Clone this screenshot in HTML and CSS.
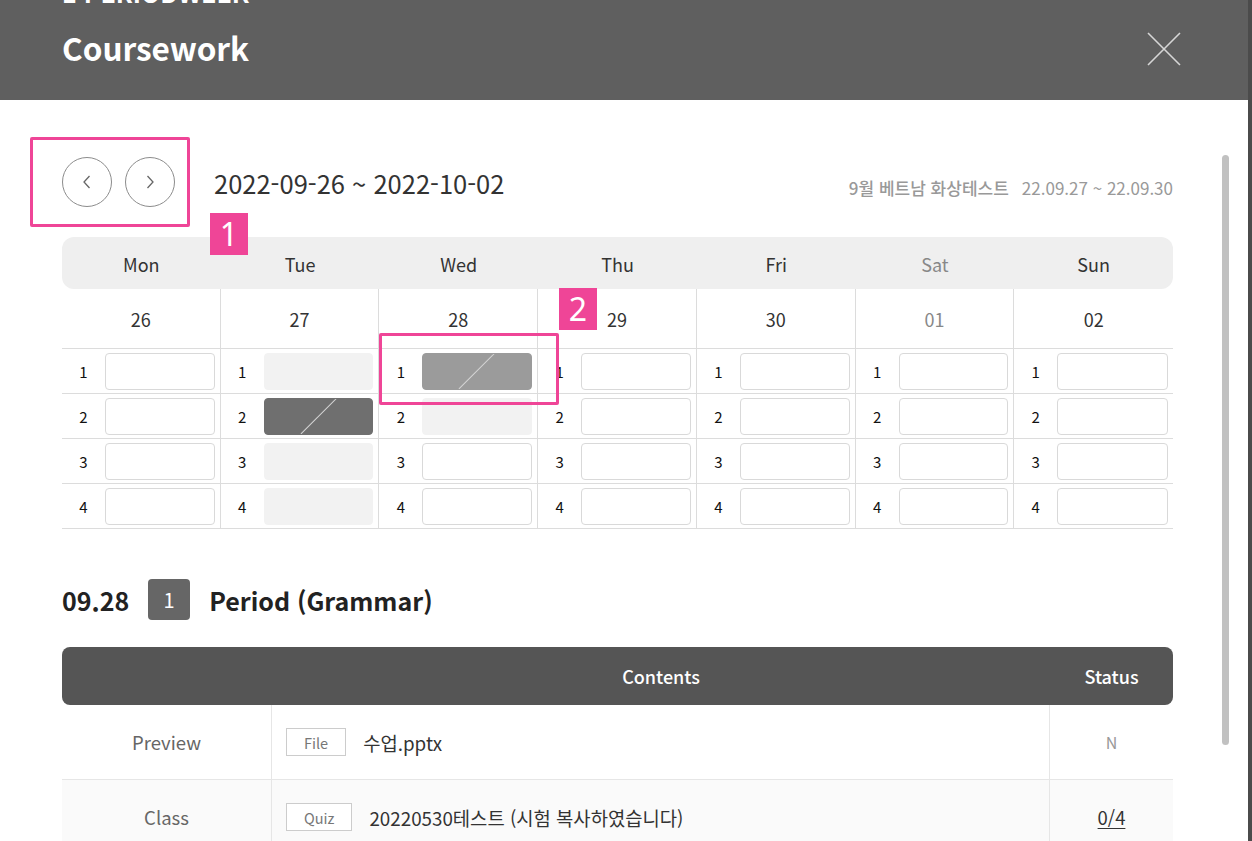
FILE: index.html
```html
<!DOCTYPE html>
<html lang="ko">
<head>
<meta charset="utf-8">
<title>Coursework</title>
<link rel="stylesheet" href="styles.css">
</head>
<body>
<div class="page">
  <div class="modal">
    <header class="modal-head">
      <div class="prev-title"><span>1 PERIODWEEK</span></div>
      <div class="head-row">
        <h1 class="title">Coursework</h1>
        <button class="close" aria-label="close">
          <svg width="34" height="34" viewBox="0 0 34 34"><path d="M1 1 L33 33 M33 1 L1 33" stroke="#d6d6d6" stroke-width="1.6" fill="none"/></svg>
        </button>
      </div>
    </header>

    <div class="modal-body">
      <div class="week-bar">
        <div class="nav">
          <button class="nav-btn" aria-label="prev">
            <svg width="12" height="18" viewBox="0 0 12 18"><path d="M8.5 3 L3 9 L8.5 15" stroke="#666" stroke-width="1.3" fill="none"/></svg>
          </button>
          <button class="nav-btn" aria-label="next">
            <svg width="12" height="18" viewBox="0 0 12 18"><path d="M3.5 3 L9 9 L3.5 15" stroke="#666" stroke-width="1.3" fill="none"/></svg>
          </button>
        </div>
        <div class="range">2022-09-26 ~ 2022-10-02</div>
        <div class="info"><span class="info-name">9월 베트남 화상테스트</span><span class="info-date">22.09.27 ~ 22.09.30</span></div>
      </div>

      <div class="calendar">
        <div class="cal-head">
          <div>Mon</div><div>Tue</div><div>Wed</div><div>Thu</div><div>Fri</div><div class="sat">Sat</div><div>Sun</div>
        </div>
        <div class="cal-grid">
          <div class="cal-col">
            <div class="cal-date">26</div>
            <div class="slot"><span class="slot-no">1</span><span class="slot-box"></span></div>
            <div class="slot"><span class="slot-no">2</span><span class="slot-box"></span></div>
            <div class="slot"><span class="slot-no">3</span><span class="slot-box"></span></div>
            <div class="slot"><span class="slot-no">4</span><span class="slot-box"></span></div>
          </div>
          <div class="cal-col">
            <div class="cal-date">27</div>
            <div class="slot"><span class="slot-no">1</span><span class="slot-box off"></span></div>
            <div class="slot"><span class="slot-no">2</span><span class="slot-box done"></span></div>
            <div class="slot"><span class="slot-no">3</span><span class="slot-box off"></span></div>
            <div class="slot"><span class="slot-no">4</span><span class="slot-box off"></span></div>
          </div>
          <div class="cal-col">
            <div class="cal-date">28</div>
            <div class="slot"><span class="slot-no">1</span><span class="slot-box active"></span></div>
            <div class="slot"><span class="slot-no">2</span><span class="slot-box off"></span></div>
            <div class="slot"><span class="slot-no">3</span><span class="slot-box"></span></div>
            <div class="slot"><span class="slot-no">4</span><span class="slot-box"></span></div>
          </div>
          <div class="cal-col">
            <div class="cal-date">29</div>
            <div class="slot"><span class="slot-no">1</span><span class="slot-box"></span></div>
            <div class="slot"><span class="slot-no">2</span><span class="slot-box"></span></div>
            <div class="slot"><span class="slot-no">3</span><span class="slot-box"></span></div>
            <div class="slot"><span class="slot-no">4</span><span class="slot-box"></span></div>
          </div>
          <div class="cal-col">
            <div class="cal-date">30</div>
            <div class="slot"><span class="slot-no">1</span><span class="slot-box"></span></div>
            <div class="slot"><span class="slot-no">2</span><span class="slot-box"></span></div>
            <div class="slot"><span class="slot-no">3</span><span class="slot-box"></span></div>
            <div class="slot"><span class="slot-no">4</span><span class="slot-box"></span></div>
          </div>
          <div class="cal-col">
            <div class="cal-date sat">01</div>
            <div class="slot"><span class="slot-no">1</span><span class="slot-box"></span></div>
            <div class="slot"><span class="slot-no">2</span><span class="slot-box"></span></div>
            <div class="slot"><span class="slot-no">3</span><span class="slot-box"></span></div>
            <div class="slot"><span class="slot-no">4</span><span class="slot-box"></span></div>
          </div>
          <div class="cal-col">
            <div class="cal-date">02</div>
            <div class="slot"><span class="slot-no">1</span><span class="slot-box"></span></div>
            <div class="slot"><span class="slot-no">2</span><span class="slot-box"></span></div>
            <div class="slot"><span class="slot-no">3</span><span class="slot-box"></span></div>
            <div class="slot"><span class="slot-no">4</span><span class="slot-box"></span></div>
          </div>
        </div>
      </div>

      <div class="period-head">
        <span class="period-date">09.28</span>
        <span class="period-badge">1</span>
        <span class="period-name">Period (Grammar)</span>
      </div>

      <div class="course-table">
        <div class="ct-head">
          <div></div>
          <div>Contents</div>
          <div>Status</div>
        </div>
        <div class="ct-row">
          <div class="ct-type">Preview</div>
          <div class="ct-content"><span class="tag">File</span><span class="ct-text">수업.pptx</span></div>
          <div class="ct-status muted">N</div>
        </div>
        <div class="ct-row alt">
          <div class="ct-type">Class</div>
          <div class="ct-content"><span class="tag">Quiz</span><span class="ct-text">20220530테스트 (시험 복사하였습니다)</span></div>
          <div class="ct-status"><span class="score">0/4</span></div>
        </div>
      </div>
    </div>

    <div class="scroll-thumb"></div>

    <div class="mark mark-nav"></div>
    <div class="mark-label label-1">1</div>
    <div class="mark mark-slot"></div>
    <div class="mark-label label-2">2</div>
  </div>
  <div class="edge"></div>
</div>
</body>
</html>
```

FILE: styles.css
```css
* { box-sizing: border-box; }

body {
  margin: 0;
  background: #4b4b4b;
  font-family: "Noto Sans CJK KR", "Noto Sans", sans-serif;
  color: #333;
  overflow: hidden;
}

button {
  font: inherit;
  background: none;
  border: 0;
  padding: 0;
  cursor: pointer;
}

.page {
  display: flex;
  height: 841px;
}

.modal {
  width: 1248px;
  height: 841px;
  background: #fff;
  position: relative;
  overflow: hidden;
}

.edge {
  flex: 1;
  background: #4b4b4b;
}

/* header */
.modal-head {
  height: 100px;
  background: #5f5f5f;
  padding: 0 67px 0 62px;
  display: flex;
  flex-direction: column;
}

.prev-title {
  height: 5px;
  overflow: hidden;
  display: flex;
  align-items: flex-end;
  color: #fff;
  font-weight: 700;
  font-size: 25px;
  line-height: 1;
}

.head-row {
  flex: 1;
  display: flex;
  align-items: center;
  justify-content: space-between;
  padding-bottom: 12px;
}

.title {
  margin: 0;
  color: #fff;
  font-size: 31.5px;
  font-weight: 700;
  line-height: 40px;
}

.close {
  width: 34px;
  height: 34px;
  display: flex;
  margin-top: 5px;
}

/* body */
.modal-body {
  padding: 57px 75px 0 62px;
}

.week-bar {
  display: flex;
  align-items: center;
  height: 50px;
}

.nav {
  display: flex;
  gap: 13px;
}

.nav-btn {
  width: 50px;
  height: 50px;
  border: 1px solid #8c8c8c;
  border-radius: 50%;
  display: flex;
  align-items: center;
  justify-content: center;
}

.range {
  margin-left: 39px;
  font-size: 25.5px;
  color: #333;
}

.info {
  margin-left: auto;
  padding-top: 10px;
  display: flex;
  gap: 13px;
  color: #999;
  font-size: 17px;
}

.info-name {
  font-weight: 500;
}

/* calendar */
.calendar {
  margin-top: 30px;
}

.cal-head {
  display: grid;
  grid-template-columns: repeat(7, 1fr);
  height: 52px;
  background: #efefef;
  border-radius: 12px;
  align-items: center;
  text-align: center;
  font-size: 18px;
  color: #333;
  padding-top: 2px;
}

.sat { color: #888; }

.cal-grid {
  display: grid;
  grid-template-columns: repeat(7, 1fr);
}

.cal-col {
  border-right: 1px solid #dcdcdc;
}

.cal-col:last-child {
  border-right: 0;
}

.cal-date {
  height: 60px;
  border-bottom: 1px solid #dcdcdc;
  display: flex;
  align-items: center;
  justify-content: center;
  font-size: 18px;
  color: #333;
}

.cal-date.sat { color: #888; }

.slot {
  height: 45px;
  border-bottom: 1px solid #dcdcdc;
  display: flex;
  align-items: center;
  padding-right: 5px;
}

.slot-no {
  width: 43px;
  text-align: center;
  font-size: 15px;
  color: #111;
}

.slot-box {
  flex: 1;
  height: 37px;
  border: 1px solid #d9d9d9;
  border-radius: 4px;
  background: #fff;
  position: relative;
  overflow: hidden;
}

.slot-box.off {
  background: #f2f2f2;
  border-color: #f2f2f2;
}

.slot-box.done {
  background: #6f6f6f;
  border-color: #6f6f6f;
}

.slot-box.active {
  background: #9b9b9b;
  border-color: #9b9b9b;
}

.slot-box.done::after,
.slot-box.active::after {
  content: "";
  position: absolute;
  left: 50%;
  top: 50%;
  width: 1.2px;
  height: 51px;
  background: #d4d4d4;
  transform: translate(-50%, -50%) rotate(45deg);
}

/* period heading */
.period-head {
  margin-top: 50px;
  display: flex;
  align-items: center;
  height: 41px;
  font-size: 25px;
  font-weight: 700;
  color: #222;
}

.period-badge {
  margin-left: 19px;
  width: 42px;
  height: 41px;
  border-radius: 4px;
  background: #666;
  color: #fff;
  font-size: 20px;
  font-weight: 400;
  display: flex;
  align-items: center;
  justify-content: center;
}

.period-name {
  margin-left: 19px;
}

/* table */
.course-table {
  margin-top: 27px;
}

.ct-head,
.ct-row {
  display: grid;
  grid-template-columns: 210px 1fr 123px;
}

.ct-head {
  height: 58px;
  background: #555;
  border-radius: 8px;
  color: #fff;
  font-size: 18px;
  font-weight: 500;
  align-items: center;
  text-align: center;
}

.ct-row {
  height: 75px;
  border-bottom: 1px solid #e6e6e6;
}

.ct-row.alt {
  background: #fafafa;
}

.ct-row > div {
  display: flex;
  align-items: center;
}

.ct-type {
  justify-content: center;
  border-right: 1px solid #e6e6e6;
  font-size: 18.5px;
  color: #666;
}

.ct-content {
  padding-left: 14px;
  gap: 17px;
  border-right: 1px solid #e6e6e6;
}

.tag {
  height: 28px;
  padding: 0 17px;
  border: 1px solid #ccc;
  background: #fff;
  color: #777;
  font-size: 14.5px;
  display: flex;
  align-items: center;
}

.ct-text {
  font-size: 18.8px;
  color: #333;
}

.ct-status {
  justify-content: center;
  font-size: 18.5px;
  color: #333;
}

.ct-status.muted {
  color: #999;
  font-size: 16px;
}

.score {
  text-decoration: underline;
  text-underline-offset: 3px;
}

/* overlays */
.scroll-thumb {
  position: absolute;
  left: 1222px;
  top: 155px;
  width: 7px;
  height: 590px;
  background: #c1c1c1;
  border-radius: 4px;
}

.mark {
  position: absolute;
  border: 3px solid #ef4597;
  border-radius: 2px;
}

.mark-nav {
  left: 30px;
  top: 137px;
  width: 160px;
  height: 90px;
}

.mark-slot {
  left: 379px;
  top: 333px;
  width: 180px;
  height: 72px;
}

.mark-label {
  position: absolute;
  width: 38px;
  height: 42px;
  background: #ef4597;
  color: #fff;
  font-family: "Noto Sans", sans-serif;
  font-size: 32px;
  line-height: 42px;
  text-align: center;
}

.label-1 {
  left: 210px;
  top: 213px;
}

.label-2 {
  left: 559px;
  top: 288px;
}
```
